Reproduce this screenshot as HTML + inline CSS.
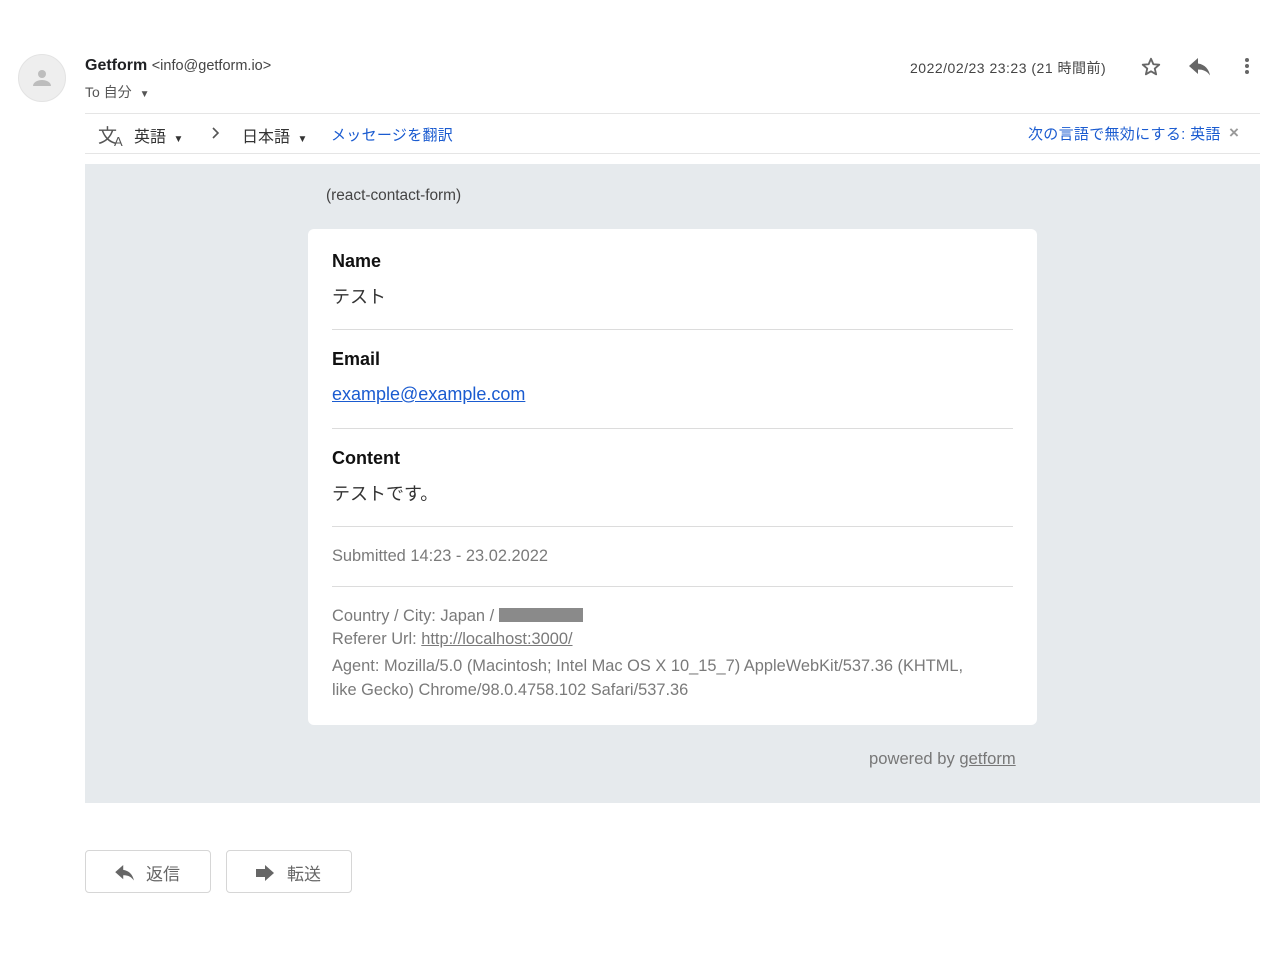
<!DOCTYPE html>
<html><head><meta charset="utf-8"><style>
*{margin:0;padding:0;box-sizing:border-box}
body{width:1280px;height:960px;background:#fff;position:relative;overflow:hidden;font-family:"Liberation Sans","Noto Sans CJK JP",sans-serif;color:#222}
.a{position:absolute;white-space:nowrap}
.line{position:absolute;height:1px;background:#e5e5e5}
.hr{position:absolute;left:24px;right:24px;height:1px;background:#dcdcdc}
.lbl{font-weight:bold;font-size:18px;color:#111}
.val{font-size:18px;color:#333}
.meta{font-size:16.4px;color:#7a7a7a}
.btn{position:absolute;top:850px;width:126px;height:43px;border:1px solid #d6d6d6;border-radius:4px;background:#fff;font-size:17px;color:#666}
</style></head><body>
<div class="a" style="left:18px;top:54px;width:48px;height:48px;border-radius:50%;background:#eeeeee;border:1px solid #e3e3e3"></div>
<svg class="a" style="left:30px;top:66px" width="24" height="24" viewBox="0 0 24 24"><circle cx="12" cy="8" r="4" fill="#bdbdbd"/><path d="M3 20c0-4 5-6 9-6s9 2 9 6z" fill="#bdbdbd"/></svg>
<div class="a" style="left:85px;top:57px;font-size:16px;color:#202124"><b>Getform</b> <span style="font-size:14.5px;color:#444">&lt;info@getform.io&gt;</span></div>
<div class="a" style="left:85px;top:82px;font-size:14px;color:#555">To 自分 <span style="font-size:10px;margin-left:4px">▼</span></div>
<div class="a" style="left:910px;top:58px;font-size:14px;color:#444;letter-spacing:0.5px">2022/02/23 23:23 (21 時間前)</div>
<svg class="a" style="left:1140px;top:56px" width="22" height="22" viewBox="0 0 24 24"><path d="M12 3l2.6 6 6.4.5-4.9 4.2 1.5 6.3L12 16.7 6.4 20l1.5-6.3L3 9.5 9.4 9z" fill="none" stroke="#666" stroke-width="2" stroke-linejoin="round"/></svg>
<svg class="a" style="left:1188px;top:57px" width="24" height="20" viewBox="0 0 24 20"><path d="M10 5V1L1 9l9 8v-4.5c5 0 9 1.5 12 6-1-6-5-11-12-12z" fill="#666"/></svg>
<div class="a" style="left:1245px;top:58px;width:4px;height:4px;border-radius:2px;background:#666;box-shadow:0 6px 0 #666,0 12px 0 #666"></div>
<div class="line" style="left:85px;top:113px;width:1175px"></div>
<div class="a" style="left:98px;top:121px;font-size:19px;color:#555">文<span style="font-size:13px;position:relative;top:4px;left:-3px">A</span></div>
<div class="a" style="left:134px;top:123px;font-size:16px;color:#333">英語 <span style="font-size:10px;margin-left:3px">▼</span></div>
<svg class="a" style="left:211px;top:127px" width="10" height="12" viewBox="0 0 10 12"><path d="M2 1l5 5-5 5" fill="none" stroke="#555" stroke-width="1.6"/></svg>
<div class="a" style="left:242px;top:123px;font-size:16px;color:#333">日本語 <span style="font-size:10px;margin-left:3px">▼</span></div>
<div class="a" style="left:331px;top:124px;font-size:15px;color:#1a5bd0;letter-spacing:0.3px">メッセージを翻訳</div>
<div class="a" style="left:1028px;top:123px;font-size:15px;color:#1a5bd0;letter-spacing:0.3px">次の言語で無効にする: 英語</div>
<div class="a" style="left:1229px;top:123px;font-size:17px;color:#999;font-weight:bold">×</div>
<div class="line" style="left:85px;top:153px;width:1175px"></div>
<div class="a" style="left:85px;top:164px;width:1175px;height:639px;background:#e6eaed"></div>
<div class="a" style="left:326px;top:187px;font-size:15.4px;color:#444">(react-contact-form)</div>
<div class="a" style="left:308px;top:229px;width:729px;height:496px;background:#fff;border-radius:6px">
 <div class="a lbl" style="left:24px;top:22px">Name</div>
 <div class="a val" style="left:24px;top:54px">テスト</div>
 <div class="hr" style="top:100px"></div>
 <div class="a lbl" style="left:24px;top:120px">Email</div>
 <div class="a val" style="left:24px;top:155px;color:#1a5bd0;text-decoration:underline">example@example.com</div>
 <div class="hr" style="top:199px"></div>
 <div class="a lbl" style="left:24px;top:219px">Content</div>
 <div class="a val" style="left:24px;top:251px">テストです。</div>
 <div class="hr" style="top:297px"></div>
 <div class="a meta" style="left:24px;top:318px">Submitted 14:23 - 23.02.2022</div>
 <div class="hr" style="top:357px"></div>
 <div class="a meta" style="left:24px;top:378px">Country / City: Japan / <span style="display:inline-block;width:84px;height:14px;background:#8a8a8a;vertical-align:-1px"></span></div>
 <div class="a meta" style="left:24px;top:401px">Referer Url: <u>http://localhost:3000/</u></div>
 <div class="a meta" style="left:24px;top:425px;line-height:24px;white-space:normal;width:640px">Agent: Mozilla/5.0 (Macintosh; Intel Mac OS X 10_15_7) AppleWebKit/537.36 (KHTML, like Gecko) Chrome/98.0.4758.102 Safari/537.36</div>
</div>
<div class="a meta" style="left:869px;top:749px;color:#777;font-size:16.6px">powered by <u>getform</u></div>
<div class="btn" style="left:85px"><svg class="a" style="left:28px;top:14px" width="22" height="16" viewBox="0 0 24 18"><path d="M10 4V0L1 8l9 8v-4.5c5 0 9 1.5 12 6-1-6-5-11-12-12z" fill="#666"/></svg><span class="a" style="left:60px;top:9px">返信</span></div>
<div class="btn" style="left:226px"><svg class="a" style="left:28px;top:13px" width="20" height="18" viewBox="0 0 20 18"><path d="M1 5h9V1l9 8-9 8v-4H1z" fill="#666"/></svg><span class="a" style="left:60px;top:9px">転送</span></div>
</body></html>
